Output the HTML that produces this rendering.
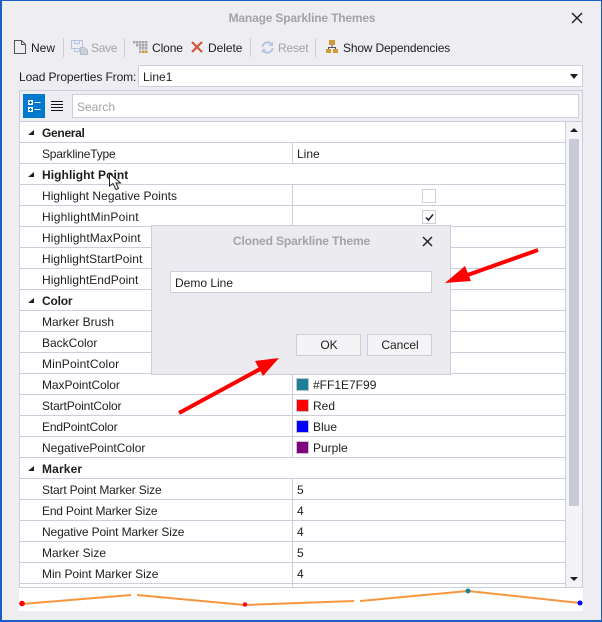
<!DOCTYPE html>
<html><head><meta charset="utf-8">
<style>
html,body{margin:0;padding:0}
body{width:602px;height:622px;position:relative;overflow:hidden;background:#eeedf2;font:12px "Liberation Sans",sans-serif;color:#1e1e1e}
.a{position:absolute;white-space:nowrap}
.t{position:absolute;white-space:nowrap;line-height:16px;height:16px}
#win{position:absolute;left:0;top:0;width:602px;height:622px;box-sizing:border-box;border:1px solid #1c5fc4;border-left-width:2px;border-right-width:1px;border-bottom-width:2px}
.box{position:absolute;background:#fff;border:1px solid #cccedb;box-sizing:border-box}
#grid{position:absolute;left:20px;top:122px;width:545px}
.r{height:21px;box-sizing:border-box;border-bottom:1px solid #cccedb;position:relative;background:#fff;line-height:22px;white-space:nowrap}
.r .k{position:absolute;left:22px;top:0}
.r .v{position:absolute;left:272px;top:0;bottom:-1px;border-left:1px solid #cccedb;padding-left:4px;width:260px}
.r.c{font-weight:bold}
.r.c:before{content:"";position:absolute;left:8px;top:8px;width:0;height:0;border-left:6px solid transparent;border-bottom:5px solid #1e1e1e}
.sw{position:absolute;left:3px;top:4px;width:11px;height:11px;border:1px solid #c4c4d0}
.v.s{padding-left:20px;width:244px}
.cb{position:absolute;left:129px;top:4px;width:14px;height:14px;box-sizing:border-box;border:1px solid #cccedb;background:#fff}
.btn{position:absolute;box-sizing:border-box;border:1px solid #cccedb;background:#f4f4f7;text-align:center;line-height:20px;height:22px;padding-left:1px}
</style></head><body>
<div id="win"></div>

<div class="t" style="left:1px;width:602px;top:10px;text-align:center;font-weight:bold;color:#a3a3a8;letter-spacing:-.17px">Manage Sparkline Themes</div>
<svg class="a" style="left:571px;top:12px" width="12" height="12"><path d="M1 1L11 11M11 1L1 11" stroke="#1e1e1e" stroke-width="1.4" fill="none"/></svg>

<!-- toolbar -->
<svg class="a" style="left:14px;top:40px" width="12" height="15"><path d="M.5.5H7.500L11.500 4.500V13.500H.5ZM7.500.5V4.500H11.500" fill="none" stroke="#555"/></svg>
<div class="t" style="left:31px;top:40px">New</div>
<div class="a" style="left:63px;top:38px;width:1px;height:19px;background:#cccedb"></div>
<svg class="a" style="left:71px;top:40px" width="18" height="15"><path d="M.5.5H11.500V8.500H.5ZM3.500.5V3.500H8.500V.5M3.500 8.500V11.500H8.500V8.500" fill="none" stroke="#b6c4dc"/><path d="M9.500 7.500H13L16.500 10V14.500H9.500Z" fill="#ccd0d8" stroke="#b8bcc6"/></svg>
<div class="t" style="left:91px;top:40px;color:#a2a4a8;letter-spacing:-.3px">Save</div>
<div class="a" style="left:124px;top:38px;width:1px;height:19px;background:#cccedb"></div>
<svg class="a" style="left:133px;top:41px" width="15" height="13"><g fill="#a8a8a8"><rect x="0" y="0" width="2.500" height="2.500"/><rect x="3" y="0" width="2.500" height="2.500"/><rect x="6" y="0" width="2.500" height="2.500"/><rect x="9" y="0" width="2.500" height="2.500"/><rect x="12" y="0" width="2.500" height="2.500"/><rect x="3" y="3" width="2.500" height="2.500"/><rect x="6" y="3" width="2.500" height="2.500"/><rect x="9" y="3" width="2.500" height="2.500"/><rect x="12" y="3" width="2.500" height="2.500"/><rect x="6" y="6" width="2.500" height="2.500"/><rect x="9" y="6" width="2.500" height="2.500"/><rect x="12" y="6" width="2.500" height="2.500"/></g><g fill="#d09a34"><rect x="9" y="9.500" width="2.500" height="2.500"/><rect x="12" y="9.500" width="2.500" height="2.500"/></g><rect x="6" y="9.500" width="2.500" height="2.500" fill="#a8a8a8"/></svg>
<div class="t" style="left:152px;top:40px;letter-spacing:-.1px">Clone</div>
<svg class="a" style="left:191px;top:41px" width="12" height="12"><path d="M1 1L11 11M11 1L1 11" stroke="#d4553a" stroke-width="2.200" fill="none"/></svg>
<div class="t" style="left:208px;top:40px;letter-spacing:-.05px">Delete</div>
<div class="a" style="left:250px;top:38px;width:1px;height:19px;background:#cccedb"></div>
<svg class="a" style="left:261px;top:41px" width="13" height="13"><path d="M1.500 6A5 5 0 0 1 10 2.800M11.500 7A5 5 0 0 1 3 10.200" fill="none" stroke="#b4c6e0" stroke-width="2"/><path d="M12 .5V5H7.500ZM1 12.500V8H5.500Z" fill="#b4c6e0"/></svg>
<div class="t" style="left:278px;top:40px;color:#a2a4a8;letter-spacing:-.2px">Reset</div>
<div class="a" style="left:315px;top:38px;width:1px;height:19px;background:#cccedb"></div>
<svg class="a" style="left:326px;top:40px" width="12" height="14"><g fill="#d09a34"><rect x="3" y="0" width="6" height="5"/><rect x="0" y="9" width="5" height="4"/><rect x="7" y="9" width="5" height="4"/></g><path d="M6 5V7.500M2.500 9V7.500H9.500V9" stroke="#555" fill="none"/></svg>
<div class="t" style="left:343px;top:40px;letter-spacing:-.18px">Show Dependencies</div>

<!-- load -->
<div class="t" style="left:19px;top:69px;letter-spacing:-.1px">Load Properties From:</div>
<div class="box" style="left:138px;top:65px;width:445px;height:22px"></div>
<div class="t" style="left:143px;top:69px">Line1</div>
<div class="a" style="left:570px;top:74px;width:0;height:0;border-left:4px solid transparent;border-right:4px solid transparent;border-top:5px solid #1e1e1e"></div>

<!-- panel -->
<div class="a" style="left:19px;top:90px;width:564px;height:498px;box-sizing:border-box;border:1px solid #cccedb;background:#eeedf2"></div>
<div class="a" style="left:23px;top:94px;width:22px;height:24px;background:#0079ce"></div>
<svg class="a" style="left:23px;top:94px" width="22" height="24"><g fill="#fff"><rect x="5" y="6" width="5" height="5"/><rect x="5" y="13" width="5" height="5"/><rect x="11.500" y="8" width="6" height="1"/><rect x="11.500" y="15" width="6" height="1"/></g><path d="M6 8.500H9M7.500 7V10M6 15.500H9M7.500 14V17" stroke="#0079ce" stroke-width="1"/></svg>
<svg class="a" style="left:51px;top:101px" width="12" height="12"><path d="M0 .5H12M0 3.500H12M0 6.500H12M0 9.500H12" stroke="#111" stroke-width="1"/></svg>
<div class="box" style="left:72px;top:94px;width:507px;height:24px"></div>
<div class="t" style="left:77px;top:99px;color:#a2a4a8">Search</div>

<!-- grid -->
<div class="a" style="left:20px;top:121px;width:562px;height:1px;background:#cccedb"></div>
<div id="grid">
<div class="r c"><span class="k" style="letter-spacing:-.3px">General</span></div>
<div class="r"><span class="k" style="letter-spacing:-.2px">SparklineType</span><span class="v">Line</span></div>
<div class="r c"><span class="k" style="letter-spacing:.07px">Highlight Point</span></div>
<div class="r"><span class="k" style="letter-spacing:.04px">Highlight Negative Points</span><span class="v"><span class="cb"></span></span></div>
<div class="r"><span class="k" style="letter-spacing:.2px">HighlightMinPoint</span><span class="v"><span class="cb"><svg style="position:absolute;left:2px;top:2px" width="9" height="9"><path d="M1 4.500L3.500 7L8 1.500" stroke="#1e1e1e" stroke-width="1.500" fill="none"/></svg></span></span></div>
<div class="r"><span class="k" style="letter-spacing:.12px">HighlightMaxPoint</span><span class="v"></span></div>
<div class="r"><span class="k" style="letter-spacing:.05px">HighlightStartPoint</span><span class="v"></span></div>
<div class="r"><span class="k" style="letter-spacing:.06px">HighlightEndPoint</span><span class="v"></span></div>
<div class="r c"><span class="k" style="letter-spacing:-.2px">Color</span></div>
<div class="r"><span class="k">Marker Brush</span><span class="v"></span></div>
<div class="r"><span class="k">BackColor</span><span class="v"></span></div>
<div class="r"><span class="k" style="letter-spacing:.15px">MinPointColor</span><span class="v"></span></div>
<div class="r"><span class="k" style="letter-spacing:-.07px">MaxPointColor</span><span class="v s"><i class="sw" style="background:#1e7f99"></i>#FF1E7F99</span></div>
<div class="r"><span class="k" style="letter-spacing:-.13px">StartPointColor</span><span class="v s"><i class="sw" style="background:#f00"></i>Red</span></div>
<div class="r"><span class="k" style="letter-spacing:-.15px">EndPointColor</span><span class="v s"><i class="sw" style="background:#00f"></i>Blue</span></div>
<div class="r"><span class="k">NegativePointColor</span><span class="v s"><i class="sw" style="background:#800080"></i>Purple</span></div>
<div class="r c"><span class="k" style="letter-spacing:.15px">Marker</span></div>
<div class="r"><span class="k" style="letter-spacing:-.17px">Start Point Marker Size</span><span class="v">5</span></div>
<div class="r"><span class="k" style="letter-spacing:-.19px">End Point Marker Size</span><span class="v">4</span></div>
<div class="r"><span class="k" style="letter-spacing:-.12px">Negative Point Marker Size</span><span class="v">4</span></div>
<div class="r"><span class="k">Marker Size</span><span class="v">5</span></div>
<div class="r"><span class="k" style="letter-spacing:-.05px">Min Point Marker Size</span><span class="v">4</span></div>
<div class="r" style="height:4px;border-bottom:0"><span class="v" style="bottom:0"></span></div>
</div>
<div class="a" style="left:19px;top:587px;width:564px;height:1px;background:#cccedb"></div>

<!-- scrollbar -->
<div class="a" style="left:565px;top:122px;width:17px;height:465px;background:#f4f4f7;border-left:1px solid #cccedb;box-sizing:border-box"></div>
<div class="a" style="left:569px;top:139px;width:10px;height:367px;background:#c8cad8"></div>
<div class="a" style="left:570px;top:128px;width:0;height:0;border-left:4px solid transparent;border-right:4px solid transparent;border-bottom:4px solid #1e1e1e"></div>
<div class="a" style="left:570px;top:577px;width:0;height:0;border-left:4px solid transparent;border-right:4px solid transparent;border-top:4px solid #1e1e1e"></div>

<!-- sparkline -->
<div class="a" style="left:19px;top:588px;width:564px;height:23px;background:#fff"></div>
<svg class="a" style="left:0;top:0" width="602" height="622"><path d="M22 604L131 595M137 595L245 605L354 601M360 601L468 591L580 603" fill="none" stroke="#f7963f" stroke-width="2"/><circle cx="22" cy="603.500" r="2.800" fill="#f00"/><circle cx="245" cy="604.500" r="2.200" fill="#f00"/><circle cx="468" cy="591" r="2.500" fill="#1e7f99"/><circle cx="580" cy="603" r="2.500" fill="#00f"/></svg>

<!-- cursor -->
<svg class="a" style="left:109px;top:173px" width="13" height="19"><path d="M.5.5V13L4 10.500L7 16.500L9.500 15.500L7 10H11.500Z" fill="#fff" stroke="#222" stroke-width="1"/></svg>

<!-- dialog -->
<div class="a" style="left:151px;top:225px;width:300px;height:150px;box-sizing:border-box;border:1px solid #cccedb;background:#ecebf0"></div>
<div class="t" style="left:151px;width:301px;top:233px;text-align:center;font-weight:bold;color:#a3a3a8;letter-spacing:-.13px">Cloned Sparkline Theme</div>
<svg class="a" style="left:422px;top:236px" width="11" height="11"><path d="M1 1L10 10M10 1L1 10" stroke="#1e1e1e" stroke-width="1.400" fill="none"/></svg>
<div class="box" style="left:170px;top:271px;width:262px;height:22px"></div>
<div class="t" style="left:175px;top:275px">Demo Line</div>
<div class="btn" style="left:296px;top:334px;width:65px">OK</div>
<div class="btn" style="left:367px;top:334px;width:65px">Cancel</div>

<!-- arrows -->
<svg class="a" style="left:0;top:0" width="602" height="622"><path d="M538 250L462 277" stroke="#f00" stroke-width="4" fill="none"/><path d="M445 283L465 266L471 281Z" fill="#f00"/><path d="M179 413L262 368" stroke="#f00" stroke-width="4" fill="none"/><path d="M279 358L263 376L255 361Z" fill="#f00"/></svg>
</body></html>
